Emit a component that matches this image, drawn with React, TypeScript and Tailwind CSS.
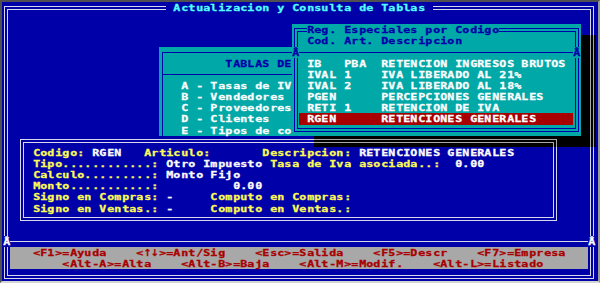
import React from 'react';

const Y = 'text-[#fcfc54]';
const WT = 'text-[#fcfcfc]';
const BL = 'text-[#0000a8]';
const RD = 'text-[#a80000]';
const CY = 'text-[#54fcfc]';

function S({ t, c = '' }: { t: string; c?: string }) {
  return (
    <>
      {Array.from(t).map((ch, i) => (
        <span
          key={i}
          className={`block w-[7.41px] h-[11.15px] shrink-0 text-center leading-[11.15px] whitespace-pre scale-x-[1.22] [-webkit-text-stroke:0.3px_currentColor] ${c}`}
        >
          {ch === ' ' ? '\u00a0' : ch}
        </span>
      ))}
    </>
  );
}

function DBox({ b }: { b: string }) {
  return (
    <div className={`h-full border ${b} p-[2px]`}>
      <div className={`h-full border ${b}`} />
    </div>
  );
}

export default function App() {
  return (
    <div className="w-[600px] h-[283px] overflow-hidden border-2 border-t-[#505050] border-l-[#505050] border-r-[#9a9a9a] border-b-[#d4d4d4] bg-[#0000a8] pl-px font-['DejaVu_Sans_Mono',monospace] font-bold text-[9.55px]">
      <div className="grid grid-cols-[repeat(80,7.41px)] grid-rows-[repeat(25,11.15px)]">
        {/* outer frame */}
        <div className="col-[1/span_80] row-[1/span_25] pl-[1px] pr-[1.8px] pt-[3.6px] pb-[1.5px]">
          <DBox b="border-[#d8d8ec]" />
        </div>
        <div className="col-[23/span_36] row-[1/span_1] flex bg-[#0000a8]">
          <S t=" Actualizacion y Consulta de Tablas " c={CY} />
        </div>

        {/* separator row 21 */}
        <div className="col-[1/span_80] row-[22/span_1] flex items-center">
          <div className="h-px w-full bg-[#d8d8ec]" />
        </div>
        <div className="col-[1/span_1] row-[22/span_1] flex bg-[#0000a8]">
          <S t="Â" c={WT} />
        </div>
        <div className="col-[80/span_1] row-[22/span_1] flex bg-[#0000a8]">
          <S t="Â" c={WT} />
        </div>

        {/* key bar */}
        <div className="col-[2/span_78] row-[23/span_2] bg-[#a8a8a8]" />
        <div className="col-[5/span_72] row-[23/span_1] flex">
          <S t="<F1>=Ayuda    <" c={RD} />
          <span className="block w-[14.82px] h-[11.15px] shrink-0 overflow-hidden text-center leading-[11.15px] tracking-[-0.7px] text-[#a80000] font-['DejaVu_Sans',sans-serif] [-webkit-text-stroke:0.3px_currentColor]">
            ↑↓
          </span>
          <S t=">=Ant/Sig    <Esc>=Salida    <F5>=Descr    <F7>=Empresa" c={RD} />
        </div>
        <div className="col-[9/span_65] row-[24/span_1] flex">
          <S t="<Alt-A>=Alta    <Alt-B>=Baja    <Alt-M>=Modif.    <Alt-L>=Listado" c={RD} />
        </div>

        {/* TABLAS window */}
        <div className="col-[22/span_37] row-[5/span_11] bg-[#00a8a8] px-[3.2px] py-[5.1px]">
          <div className="h-full border border-[#0000a8]" />
        </div>
        <div className="col-[22/span_37] row-[7/span_1] flex items-center pl-[3.2px]">
          <div className="h-px w-full bg-[#0000a8]" />
        </div>
        <div className="col-[31/span_9] row-[6/span_1] flex">
          <S t="TABLAS DE" c={BL} />
        </div>
        <div className="col-[25/span_15] row-[8/span_1] flex">
          <S t="A - Tasas de IV" c={WT} />
        </div>
        <div className="col-[25/span_15] row-[9/span_1] flex">
          <S t="B - Vendedores" c={WT} />
        </div>
        <div className="col-[25/span_15] row-[10/span_1] flex">
          <S t="C - Proveedores" c={WT} />
        </div>
        <div className="col-[25/span_15] row-[11/span_1] flex">
          <S t="D - Clientes" c={WT} />
        </div>
        <div className="col-[25/span_15] row-[12/span_1] flex">
          <S t="E - Tipos de co" c={WT} />
        </div>

        {/* lower panel */}
        <div className="col-[3/span_73] row-[13/span_8] bg-[#0000a8] px-[1.7px] py-[3.6px]">
          <DBox b="border-[#d8d8ec]" />
        </div>
        <div className="col-[5/span_66] row-[14/span_1] flex">
          <S t="Codigo:" c={Y} />
          <S t=" RGEN   " c={WT} />
          <S t="Articulo:" c={Y} />
          <S t="       " />
          <S t="Descripcion:" c={Y} />
          <S t=" RETENCIONES GENERALES" c={WT} />
        </div>
        <div className="col-[5/span_62] row-[15/span_1] flex">
          <S t="Tipo............:" c={Y} />
          <S t=" Otro Impuesto " c={WT} />
          <S t="Tasa de Iva asociada..:" c={Y} />
          <S t="  0.00" c={WT} />
        </div>
        <div className="col-[5/span_30] row-[16/span_1] flex">
          <S t="Calculo.........:" c={Y} />
          <S t=" Monto Fijo" c={WT} />
        </div>
        <div className="col-[5/span_32] row-[17/span_1] flex">
          <S t="Monto...........:" c={Y} />
          <S t="          0.00" c={WT} />
        </div>
        <div className="col-[5/span_44] row-[18/span_1] flex">
          <S t="Signo en Compras:" c={Y} />
          <S t=" -     " c={WT} />
          <S t="Computo en Compras:" c={Y} />
        </div>
        <div className="col-[5/span_44] row-[19/span_1] flex">
          <S t="Signo en Ventas.:" c={Y} />
          <S t=" -     " c={WT} />
          <S t="Computo en Ventas.:" c={Y} />
        </div>

        {/* popup */}
        <div className="col-[40/span_39] row-[3/span_10] bg-[#00a8a8] px-[1.7px] py-[3.6px]">
          <DBox b="border-[#0000a8]" />
        </div>
        <div className="col-[42/span_26] row-[3/span_1] flex bg-[#00a8a8]">
          <S t="Reg. Especiales por Codigo" c={BL} />
        </div>
        <div className="col-[42/span_21] row-[4/span_1] flex">
          <S t="Cod. Art. Descripcion" c={BL} />
        </div>
        <div className="col-[40/span_39] row-[5/span_1] flex items-center">
          <div className="h-px w-full bg-[#0000a8]" />
        </div>
        <div className="col-[40/span_1] row-[5/span_1] flex bg-[#00a8a8]">
          <S t="Â" c={BL} />
        </div>
        <div className="col-[78/span_1] row-[5/span_1] flex bg-[#00a8a8]">
          <S t="Â" c={BL} />
        </div>
        <div className="col-[42/span_35] row-[6/span_1] flex">
          <S t="IB   PBA  RETENCION INGRESOS BRUTOS" c={WT} />
        </div>
        <div className="col-[42/span_35] row-[7/span_1] flex">
          <S t="IVAL 1    IVA LIBERADO AL 21%" c={WT} />
        </div>
        <div className="col-[42/span_35] row-[8/span_1] flex">
          <S t="IVAL 2    IVA LIBERADO AL 18%" c={WT} />
        </div>
        <div className="col-[42/span_35] row-[9/span_1] flex">
          <S t="PGEN      PERCEPCIONES GENERALES" c={WT} />
        </div>
        <div className="col-[42/span_35] row-[10/span_1] flex">
          <S t="RETI 1    RETENCION DE IVA" c={WT} />
        </div>
        <div className="col-[41/span_37] row-[11/span_1] bg-[#a80000]" />
        <div className="col-[42/span_35] row-[11/span_1] flex">
          <S t="RGEN      RETENCIONES GENERALES" c={WT} />
        </div>

        {/* popup shadow */}
        <div className="col-[79/span_2] row-[4/span_10] bg-black" />
        <div className="col-[43/span_36] row-[13/span_1] bg-black" />
        <div className="col-[80/span_1] row-[4/span_10] flex justify-end pr-[1.8px]">
          <div className="h-full w-[4px] border-x border-[#a8a8a8]" />
        </div>
        <div className="col-[43/span_33] row-[13/span_1] overflow-hidden pr-[1.7px] pt-[3.6px]">
          <div className="h-[20px] border-t border-r border-[#a8a8a8] pt-[2px] pr-[2px]">
            <div className="h-full border-t border-r border-[#a8a8a8]" />
          </div>
        </div>
      </div>
    </div>
  );
}
